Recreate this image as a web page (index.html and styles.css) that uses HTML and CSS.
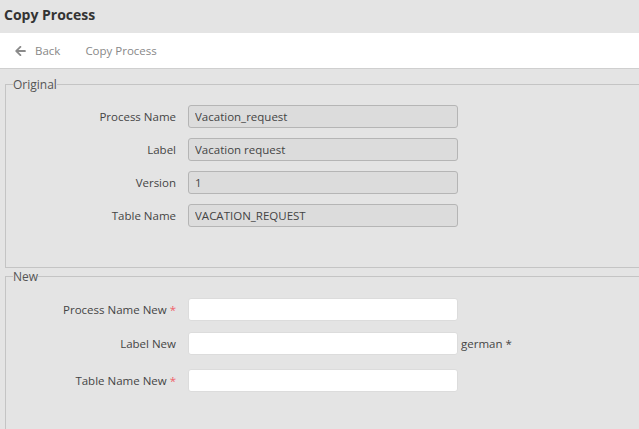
FILE: index.html
```html
<!DOCTYPE html>
<html lang="en">
<head>
    <meta charset="UTF-8">
    <title>Copy Process</title>
    <link rel="stylesheet" href="styles.css">
</head>
<body>
    <div class="title">Copy Process</div>

    <div class="toolbar">
        <a class="tool back" href="#">
            <svg class="arrow" viewBox="0 0 448 512" width="11" height="12"><path d="M257.5 445.1l-22.2 22.2c-9.4 9.4-24.6 9.4-33.9 0L7 273c-9.4-9.4-9.4-24.6 0-33.9L201.4 44.7c9.4-9.4 24.6-9.4 33.9 0l22.2 22.2c9.5 9.5 9.3 25-.4 34.3L136.6 216H424c13.3 0 24 10.7 24 24v32c0 13.3-10.7 24-24 24H136.6l120.5 114.8c9.8 9.300 10 24.8.4 34.3z"/></svg>
            Back
        </a>
        <span class="tool">Copy Process</span>
    </div>

    <fieldset class="group original">
        <legend>Original</legend>
        <div class="row">
            <label>Process Name</label>
            <input class="field readonly" type="text" value="Vacation_request" readonly>
        </div>
        <div class="row">
            <label>Label</label>
            <input class="field readonly" type="text" value="Vacation request" readonly>
        </div>
        <div class="row">
            <label>Version</label>
            <input class="field readonly" type="text" value="1" readonly>
        </div>
        <div class="row">
            <label>Table Name</label>
            <input class="field readonly" type="text" value="VACATION_REQUEST" readonly>
        </div>
    </fieldset>

    <fieldset class="group new">
        <legend>New</legend>
        <div class="row">
            <label>Process Name New <span class="req">*</span></label>
            <input class="field" type="text">
        </div>
        <div class="row">
            <label>Label New</label>
            <input class="field" type="text">
            <span class="lang">german *</span>
        </div>
        <div class="row row-loose">
            <label>Table Name New <span class="req">*</span></label>
            <input class="field" type="text">
        </div>
    </fieldset>
</body>
</html>
```

FILE: styles.css
```css
body {
    margin: 0;
    font-family: "Open Sans", Arial, sans-serif;
    font-size: 11.5px;
    color: #444;
    background: #e4e4e4;
    overflow: hidden;
}
.title {
    height: 33px;
    line-height: 29px;
    padding-left: 4px;
    font-size: 14px;
    font-weight: bold;
    color: #333;
}
.toolbar {
    background: #fff;
    height: 35px;
    border-bottom: 1px solid #cfcfcf;
    display: flex;
    align-items: center;
    gap: 25px;
    padding-left: 15px;
}
.tool {
    color: #888;
    text-decoration: none;
    display: flex;
    align-items: center;
}
.arrow {
    fill: #8a8a8a;
    margin-right: 9px;
}
.group {
    margin: 7px -10px 0 5px;
    padding: 0 0 40px 0;
    border: 1px solid #c4c4c4;
    border-right: none;
}
.group legend {
    padding: 0;
    margin-left: 7px;
    color: #555;
    font-size: 12px;
    line-height: 17px;
}
.group.new {
    margin-top: 0;
    padding-bottom: 40px;
}
.row {
    display: grid;
    grid-template-columns: 170px 270px auto;
    column-gap: 12px;
    align-items: center;
    margin-top: 10px;
}
.original .row:first-of-type {
    margin-top: 12px;
}
.new .row {
    margin-top: 11px;
}
.new .row:first-of-type {
    margin-top: 13px;
}
.new .row.row-loose {
    margin-top: 14px;
}
.row label {
    text-align: right;
    color: #444;
}
.req {
    color: #f0606a;
}
.field {
    box-sizing: border-box;
    height: 23px;
    width: 270px;
    padding: 0 6px;
    font-family: inherit;
    font-size: 11.5px;
    color: #444;
    border: 1px solid #dcdcdc;
    border-radius: 3px;
    background: #fff;
    outline: none;
}
.field.readonly {
    background: #dcdcdc;
    border-color: #b5b5b5;
}
.lang {
    margin-left: -9px;
    color: #444;
}
```
